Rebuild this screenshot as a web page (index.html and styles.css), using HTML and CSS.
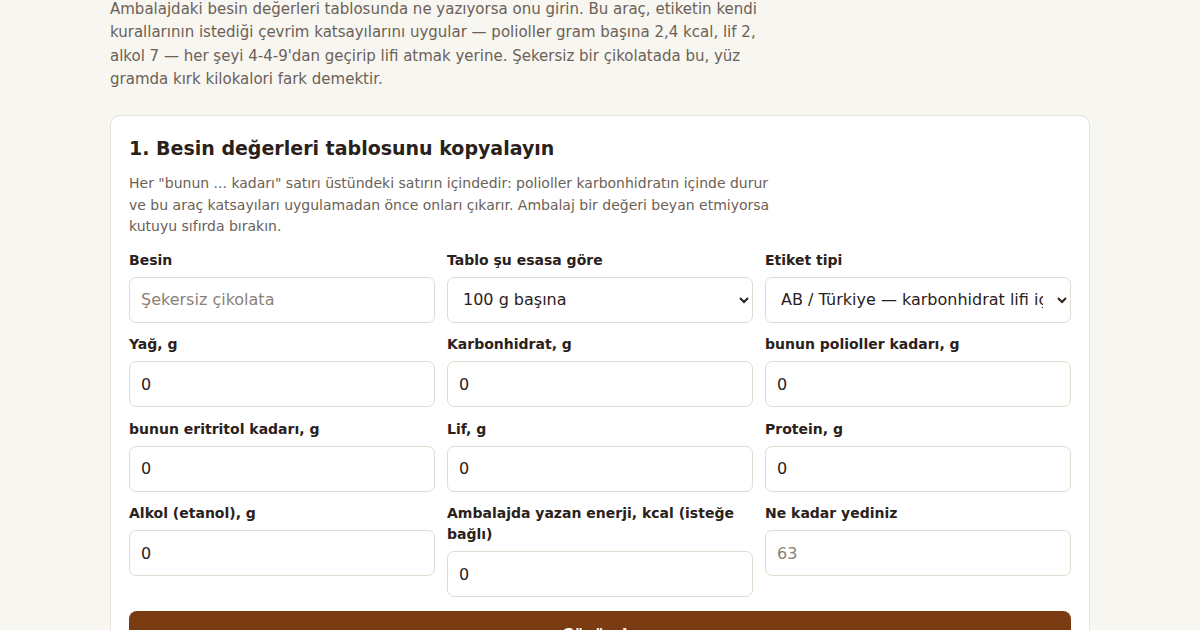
FILE: index.html
```html
<!DOCTYPE html>
<html lang="tr">
<head>
    <meta charset="UTF-8">
    <title>Etiket kalori hesaplayıcı</title>
    <link rel="stylesheet" href="styles.css">
</head>
<body>
    <div class="page">
        <p class="intro">Ambalajdaki besin değerleri tablosunda ne yazıyorsa onu girin. Bu araç, etiketin kendi kurallarının istediği çevrim katsayılarını uygular — polioller gram başına 2,4 kcal, lif 2, alkol 7 — her şeyi 4-4-9'dan geçirip lifi atmak yerine. Şekersiz bir çikolatada bu, yüz gramda kırk kilokalori fark demektir.</p>

        <div class="card">
            <h2>1. Besin değerleri tablosunu kopyalayın</h2>
            <p class="hint">Her "bunun ... kadarı" satırı üstündeki satırın içindedir: polioller karbonhidratın içinde durur ve bu araç katsayıları uygulamadan önce onları çıkarır. Ambalaj bir değeri beyan etmiyorsa kutuyu sıfırda bırakın.</p>

            <div class="fields">
                <label class="field">
                    <span>Besin</span>
                    <input type="text" placeholder="Şekersiz çikolata">
                </label>
                <label class="field">
                    <span>Tablo şu esasa göre</span>
                    <select>
                        <option>100 g başına</option>
                        <option>Porsiyon başına</option>
                    </select>
                </label>
                <label class="field">
                    <span>Etiket tipi</span>
                    <select>
                        <option>AB / Türkiye — karbonhidrat lifi içermez</option>
                        <option>ABD — karbonhidrat lifi içerir</option>
                    </select>
                </label>

                <label class="field">
                    <span>Yağ, g</span>
                    <input type="number" value="0">
                </label>
                <label class="field">
                    <span>Karbonhidrat, g</span>
                    <input type="number" value="0">
                </label>
                <label class="field">
                    <span>bunun polioller kadarı, g</span>
                    <input type="number" value="0">
                </label>

                <label class="field">
                    <span>bunun eritritol kadarı, g</span>
                    <input type="number" value="0">
                </label>
                <label class="field">
                    <span>Lif, g</span>
                    <input type="number" value="0">
                </label>
                <label class="field">
                    <span>Protein, g</span>
                    <input type="number" value="0">
                </label>

                <label class="field">
                    <span>Alkol (etanol), g</span>
                    <input type="number" value="0">
                </label>
                <label class="field">
                    <span>Ambalajda yazan enerji, kcal (isteğe bağlı)</span>
                    <input type="number" value="0">
                </label>
                <label class="field">
                    <span>Ne kadar yediniz</span>
                    <input type="number" placeholder="63">
                </label>
            </div>

            <button class="go" type="button">Çözümle</button>
        </div>
    </div>
</body>
</html>
```

FILE: styles.css
```css
body {
    margin: 0;
    background: #f8f6f1;
    color: #2a211b;
    font-family: "DejaVu Sans", Verdana, sans-serif;
}

.page {
    max-width: 980px;
    margin: 0 auto;
}

.intro {
    max-width: 680px;
    margin: -2px 0 24px;
    font-size: 15px;
    line-height: 23.25px;
    color: #6b6157;
}

.card {
    background: #fff;
    border: 1px solid #e8e2d8;
    border-radius: 10px;
    padding: 19px 18px 30px;
}

.card h2 {
    margin: 0 0 12px;
    font-size: 19px;
    line-height: 26px;
    font-weight: bold;
}

.hint {
    max-width: 645px;
    margin: 0 0 12px;
    font-size: 14px;
    line-height: 21.5px;
    color: #6b6157;
}

.fields {
    display: grid;
    grid-template-columns: repeat(3, 1fr);
    column-gap: 12px;
    row-gap: 11.6px;
    align-items: start;
}

.field {
    display: flex;
    flex-direction: column;
    gap: 6px;
}

.field span {
    font-size: 14px;
    line-height: 21px;
    font-weight: bold;
}

.field input,
.field select {
    box-sizing: border-box;
    width: 100%;
    height: 46px;
    padding: 0 11px;
    border: 1px solid #e2dbcf;
    border-radius: 7px;
    background: #fff;
    color: #2a211b;
    font-family: inherit;
    font-size: 16px;
    outline: none;
}

.field input::placeholder {
    color: #8a8178;
}

.go {
    display: block;
    width: 100%;
    height: 48px;
    margin-top: 14px;
    padding-top: 0;
    border: none;
    border-radius: 8px;
    background: #7a3a12;
    color: #fff;
    font-family: inherit;
    font-size: 16px;
    line-height: 32px;
    font-weight: bold;
}
```
